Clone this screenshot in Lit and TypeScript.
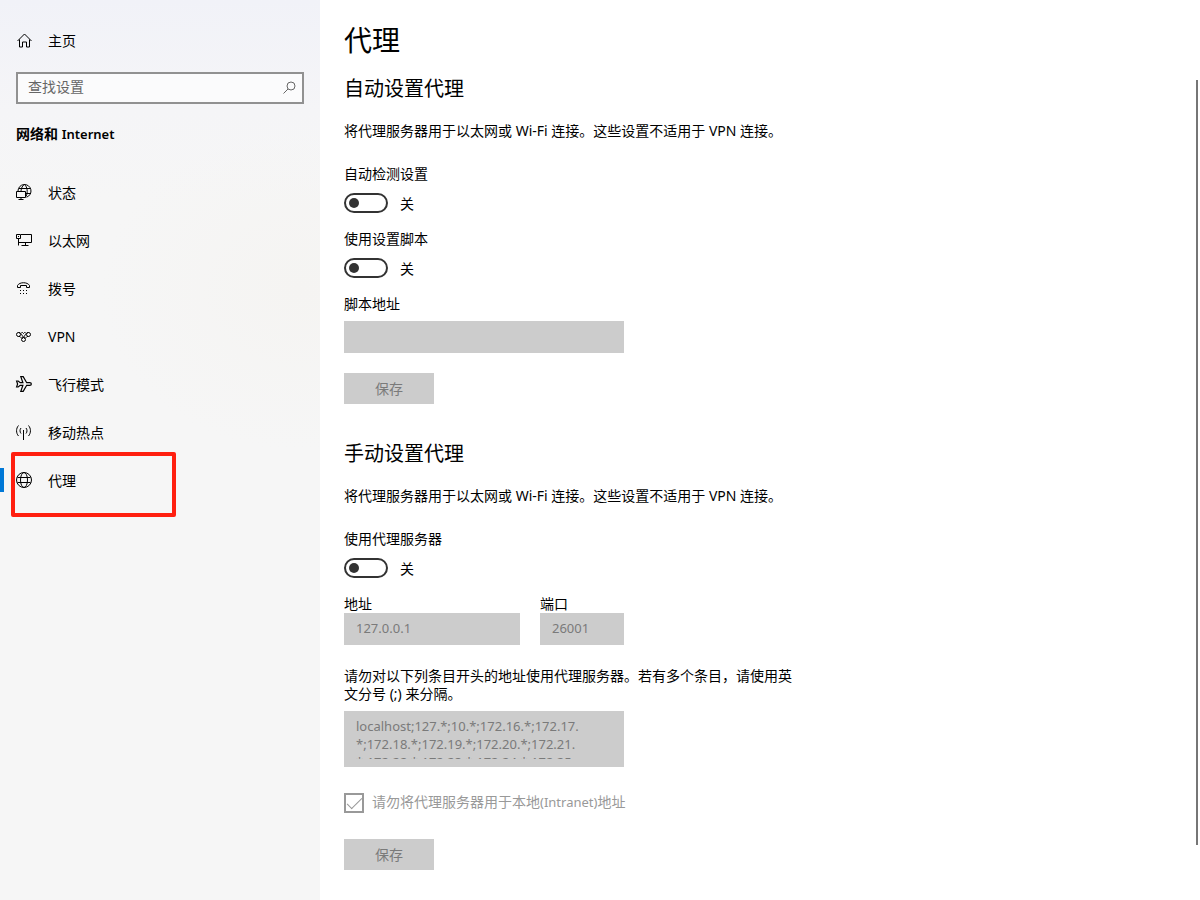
import { LitElement, html, css, svg, nothing } from "lit";
import { customElement, property } from "lit/decorators.js";

const icons = {
  home: svg`<path d="M1.500 8 8.500 1l7 7M3.500 6.500v7.500h3v-5h4v5h3V6.500"/>`,
  status: svg`<path d="M2 7A6.500 6.500 0 1 1 10.500 13.200M3 4.500h11.500M10 9.500h5M5 7C5.200 4 6.500 1.500 8.500.5M8.500.5c3 2.500 3.500 8 1.500 12"/><path d="M.5 7.500h9v6h-9zM5 13.500v2M2.500 15.500h5"/>`,
  ethernet: svg`<path d="M5 2.500h10.500v8H2.500M9.500 10.500v3M5.500 13.500h7M.5 2.500h4v4h-4zM2.500 6.500v7M2 4.500h1"/>`,
  dialup: svg`<path d="M1.500 7.500V5.500C3.500 1.800 11.500 1.800 13.500 5.500v2h-3v-2h-6v2h-3z"/><path stroke-dasharray="1 2" d="M4 10.500h7M4 13.500h7"/>`,
  vpn: svg`<circle cx="2.500" cy="6.500" r="2"/><circle cx="12.500" cy="6.500" r="2"/><circle cx="7.500" cy="11.500" r="2"/><path d="M2.500 4.500C5.500 4 6 9 9 10.500M12.500 4.500C9.500 4 9 9 6 10.500M5.500 4.500h1l1 1 1-1h1M2.500 8.500h1.500l1.500 1.500M12.500 8.500H11L9.500 10"/>`,
  airplane: svg`<path stroke-width="1.200" d="M.6 5h1.600l2 1.700h2.700L4.800.6h2.400l3.500 6.100h3c2.200 0 2.200 2.600 0 2.600h-3l-3.500 6.100H4.800l2.100-6.100H4.200l-2 1.700H.6L1.600 8z"/>`,
  hotspot: svg`<path d="M7.500 6v10M7 6.500h1M5 4c-1.300 1.500-1.300 4 0 5.500M10 4c1.300 1.500 1.300 4 0 5.500M2.500 1.500c-2.600 3-2.600 7.500 0 10.500M12.500 1.500c2.600 3 2.600 7.500 0 10.500"/>`,
  globe: svg`<circle cx="8" cy="8" r="7.500"/><ellipse cx="8" cy="8" rx="3.500" ry="7.500"/><path d="M1.500 5.500h13M1.500 10.500h13"/>`,
  search: svg`<circle cx="9" cy="6" r="4"/><path d="M6 9 1.500 13.500"/>`,
};

const draw = (name: keyof typeof icons) =>
  html`<svg class="icon" viewBox="0 0 16 16" width="16" height="16" fill="none" stroke="currentColor" aria-hidden="true">${icons[name]}</svg>`;

const base = css`
  :host {
    display: block;
    font: 14px/18px "Noto Sans", "Noto Sans CJK SC", sans-serif;
    color: #000;
  }
  *, *::before, *::after { box-sizing: border-box; }
  h1, h2, p { margin: 0; font-weight: 400; }
  input, textarea, button { font: inherit; margin: 0; border-radius: 0; }
  .latin { font-size: 13px; }
`;

@customElement("settings-nav")
class SettingsNav extends LitElement {
  static styles = [
    base,
    css`
      :host {
        background:
          radial-gradient(ellipse 200px 160px at 300px 290px, #f5f4f2, transparent),
          linear-gradient(#f1f2f8, #f5f5f7 110px, #f6f6f6 200px);
      }
      a { color: inherit; text-decoration: none; }
      .icon { flex: none; overflow: visible; }
      .home { display: flex; gap: 16px; align-items: center; padding: 32px 16px 0; }
      .search {
        display: flex; align-items: center; height: 32px; margin: 22px 16px 0;
        border: 2px solid #919191; background: rgba(255, 255, 255, 0.6);
        padding: 0 4px 0 10px; color: #666;
      }
      .search input {
        flex: 1; min-width: 0; border: 0; padding: 0 0 2px; background: none; outline: none;
      }
      .search input::placeholder { color: #666; opacity: 1; }
      .category { font-size: 14px; font-weight: 600; padding: 21px 16px 25px; }
      .item {
        position: relative; display: flex; align-items: center; gap: 16px;
        height: 48px; padding: 2px 16px 0;
      }
      .item .icon { margin-bottom: 2px; }
      .current::before {
        content: ""; position: absolute; left: 0; top: 12px; width: 4px; height: 24px;
        background: #0078d7;
      }
      .current::after {
        content: ""; position: absolute; left: 11px; top: -4px; width: 165px; height: 65px;
        border: 4px solid #ff1f10; border-radius: 2px;
      }
    `,
  ];

  private items: { icon: keyof typeof icons; text: string; current?: boolean }[] = [
    { icon: "status", text: "状态" },
    { icon: "ethernet", text: "以太网" },
    { icon: "dialup", text: "拨号" },
    { icon: "vpn", text: "VPN" },
    { icon: "airplane", text: "飞行模式" },
    { icon: "hotspot", text: "移动热点" },
    { icon: "globe", text: "代理", current: true },
  ];

  render() {
    return html`
      <a class="home" href="#">${draw("home")}<span>主页</span></a>
      <label class="search">
        <input type="text" placeholder="查找设置" aria-label="查找设置" />
        ${draw("search")}
      </label>
      <h2 class="category">网络和 <span class="latin">Internet</span></h2>
      <nav>
        ${this.items.map(
          (i) => html`<a class="item ${i.current ? "current" : ""}" href="#"
            aria-current=${i.current ? "page" : nothing}>
            ${draw(i.icon)}<span>${i.text}</span>
          </a>`
        )}
      </nav>
    `;
  }
}

@customElement("toggle-field")
class ToggleField extends LitElement {
  @property() label = "";

  static styles = [
    base,
    css`
      label { display: block; }
      .row { display: flex; gap: 12px; height: 20px; margin-top: 10px; }
      .row span { padding-top: 2px; }
      input {
        appearance: none; width: 44px; height: 20px; border: 2px solid #333;
        border-radius: 10px; display: flex; align-items: center; padding: 0 3px;
      }
      input::before {
        content: ""; width: 10px; height: 10px; border-radius: 50%; background: #333;
      }
    `,
  ];

  render() {
    return html`
      <label for="switch">${this.label}</label>
      <div class="row"><input id="switch" type="checkbox" role="switch" /><span>关</span></div>
    `;
  }
}

@customElement("app-root")
class AppRoot extends LitElement {
  static styles = [
    base,
    css`
      :host {
        display: grid; grid-template-columns: 320px minmax(0, 1fr) 4px;
        min-height: 100vh; background: #fff;
      }
      main { padding: 22px 24px 30px; }
      h1 { font-size: 28px; line-height: 36px; }
      h2 { font-size: 20px; line-height: 28px; margin: 17px 0 19px; }
      .manual { margin-top: 36px; }
      .intro { margin-bottom: 25px; }
      toggle-field { margin-bottom: 17px; }
      label { display: block; }
      .box {
        display: block; width: 100%; height: 32px; border: 0; background: #ccc;
        color: #7a7a7a; padding: 0 12px 2px; font-size: 13px;
      }
      .script { width: 280px; margin: 8px 0 20px; }
      button {
        display: block; width: 90px; height: 31px; border: 0; padding: 0;
        background: #ccc; color: #7a7a7a;
      }
      .server { display: grid; grid-template-columns: 176px 84px; gap: 20px; }
      .bypass { display: block; max-width: 456px; margin: 22px 0 8px; }
      .list {
        display: block; width: 280px; height: 56px; resize: none; overflow: hidden;
        border: solid #ccc; border-width: 6px 0 8px; padding: 0 12px;
        background: #ccc; color: #7a7a7a; font-size: 13px;
      }
      .local { display: flex; gap: 8px; margin: 26px 0; color: #999; }
      .local input {
        appearance: none; width: 20px; height: 20px; border: 2px solid #999; display: flex;
        align-items: center; justify-content: center;
      }
      .local input::before {
        content: ""; width: 15px; height: 7px; border: solid #999; border-width: 0 0 1px 1px;
        transform: translateY(-2px) rotate(-45deg);
      }
      .scroll { width: 2px; background: #767676; margin: 80px 0 55px; }
    `,
  ];

  private bypass =
    "localhost;127.*;10.*;172.16.*;172.17.\n*;172.18.*;172.19.*;172.20.*;172.21.\n*;172.22.*;172.23.*;172.24.*;172.25.";

  private intro() {
    return html`<p class="intro">将代理服务器用于以太网或 Wi-Fi 连接。这些设置不适用于 VPN 连接。</p>`;
  }

  render() {
    return html`
      <settings-nav></settings-nav>
      <main>
        <h1>代理</h1>
        <section>
          <h2>自动设置代理</h2>
          ${this.intro()}
          <toggle-field label="自动检测设置"></toggle-field>
          <toggle-field label="使用设置脚本"></toggle-field>
          <label for="script">脚本地址</label>
          <input class="box script" id="script" type="text" disabled />
          <button type="button" disabled>保存</button>
        </section>
        <section>
          <h2 class="manual">手动设置代理</h2>
          ${this.intro()}
          <toggle-field label="使用代理服务器"></toggle-field>
          <div class="server">
            <div>
              <label for="address">地址</label>
              <input class="box" id="address" type="text" value="127.0.0.1" disabled />
            </div>
            <div>
              <label for="port">端口</label>
              <input class="box" id="port" type="text" value="26001" disabled />
            </div>
          </div>
          <label class="bypass" for="bypass">请勿对以下列条目开头的地址使用代理服务器。若有多个条目，请使用英文分号 (;) 来分隔。</label>
          <textarea class="list" id="bypass" disabled .value=${this.bypass}></textarea>
          <label class="local"><input type="checkbox" checked disabled /><span>请勿将代理服务器用于本地<span class="latin">(Intranet)</span>地址</span></label>
          <button type="button" disabled>保存</button>
        </section>
      </main>
      <div class="scroll"></div>
    `;
  }
}
